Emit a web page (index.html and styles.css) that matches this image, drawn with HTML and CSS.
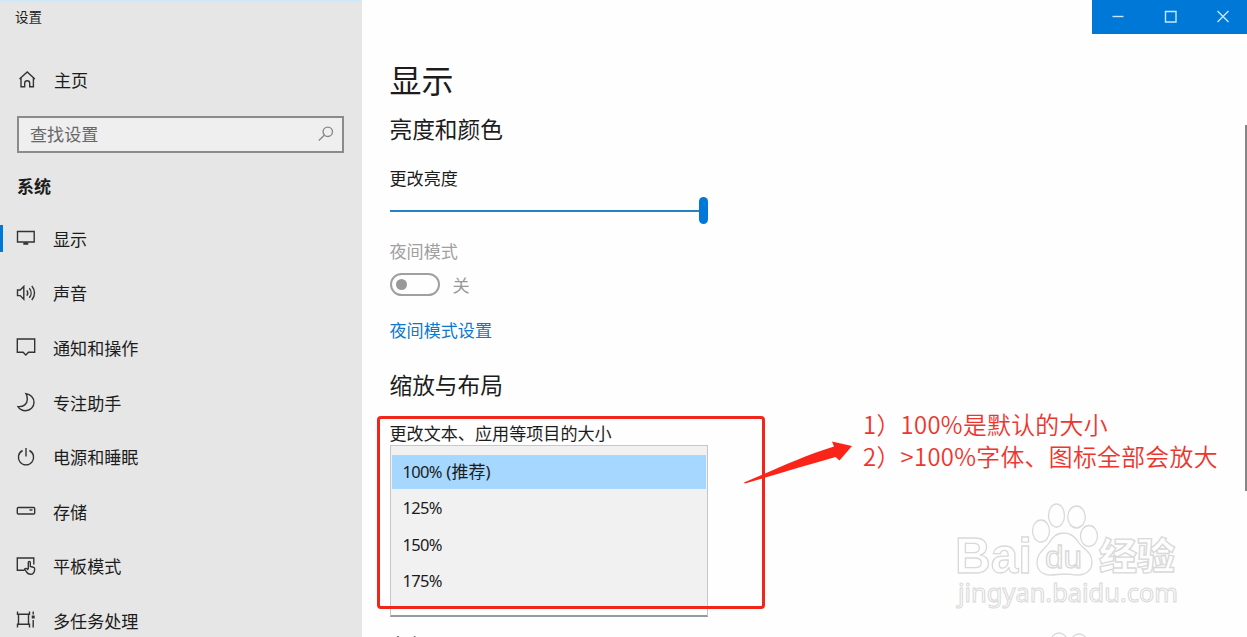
FILE: index.html
```html
<!DOCTYPE html>
<html lang="zh-CN">
<head>
    <meta charset="UTF-8">
    <meta name="viewport" content="width=device-width, initial-scale=1.0">
    <title>设置</title>
    <link rel="stylesheet" href="styles.css">
</head>
<body>
    <aside class="sidebar">
        <div class="app-title">设置</div>

        <a class="home">
            <svg class="icon" width="20" height="20" viewBox="0 0 20 20"><path d="M2.500 10 10.200 3l7.700 7M4 9v8.800h3.700v-3.800c0-3 5-3 5 0v3.800h3.700V9"/></svg>
            <span>主页</span>
        </a>

        <div class="search">
            <span>查找设置</span>
            <svg class="icon" width="16" height="16" viewBox="0 0 16 16"><circle cx="9.8" cy="5.8" r="4.7"/><path d="M6.3 9.3.8 14.6"/></svg>
        </div>

        <h2 class="group">系统</h2>

        <nav class="nav">
            <a class="nav-item active">
                <svg class="icon" width="20" height="20" viewBox="0 0 20 20"><path d="M1.5 3.5h16.7v10.5H1.5z"/><path d="M9.8 14v2M7.300 15.800h5" stroke-width="2"/></svg>
                <span>显示</span>
            </a>
            <a class="nav-item">
                <svg class="icon" width="20" height="20" viewBox="0 0 20 20"><path d="M1.5 7h2.7l3.6-3.6v12.8L4.2 12.6H1.5zM10.8 7.3c1.2 1.6 1.2 3.8 0 5.4M13.3 5.2c2.4 2.8 2.4 6.8 0 9.6M15.8 3c3.6 4.2 3.6 9.8 0 14"/></svg>
                <span>声音</span>
            </a>
            <a class="nav-item">
                <svg class="icon" width="20" height="20" viewBox="0 0 20 20"><path d="M1.3 2h17.4v13.2h-6.2L9.8 18l-2.7-2.8H1.3z"/></svg>
                <span>通知和操作</span>
            </a>
            <a class="nav-item">
                <svg class="icon" width="20" height="20" viewBox="0 0 20 20"><path d="M10 1.6c4.5.6 8 4.3 8 8.800 0 4.800-3.800 8.300-8.300 8.300-3.300 0-6.200-1.600-7.700-4.100 5.700.5 9.300-2.700 9.300-7.200 0-2.300-.3-4.300-1.300-5.800z"/></svg>
                <span>专注助手</span>
            </a>
            <a class="nav-item">
                <svg class="icon" width="20" height="20" viewBox="0 0 20 20"><path d="M10 1v8.5M6.6 3.5a7.600 7.600 0 1 0 6.800 0"/></svg>
                <span>电源和睡眠</span>
            </a>
            <a class="nav-item">
                <svg class="icon" width="20" height="20" viewBox="0 0 20 20"><rect x="1.300" y="6.500" width="17.400" height="6.500" rx="1"/><path d="M13.500 9h3"/></svg>
                <span>存储</span>
            </a>
            <a class="nav-item">
                <svg class="icon" width="20" height="20" viewBox="0 0 20 20"><path d="M8.5 14.200H1.300V2h16.500v6.500M12.300 13V6.500c0-1.500 2-1.500 2 0v4l3 .7c1 .3 1.500 1 1.400 2-.2 3-1.500 5.100-4.200 5.100-2 0-3-.8-4-2.300L8.700 13c.8-1 2-.8 3.600.9"/></svg>
                <span>平板模式</span>
            </a>
            <a class="nav-item">
                <svg class="icon" width="20" height="20" viewBox="0 0 20 20"><path d="M1.500 1.500v2.700h12V1.500M2.500 4.200v10M12.500 4.200v10M1.500 17.500v-3.300h12v3.300M17.200 1.500v3M17.200 10v7.500"/><path d="M17.200 5.500v3" stroke-width="3"/></svg>
                <span>多任务处理</span>
            </a>
        </nav>
    </aside>

    <main class="content">
        <h1>显示</h1>
        <h2>亮度和颜色</h2>

        <div class="label">更改亮度</div>
        <div class="slider"><div class="track"></div><div class="thumb"></div></div>

        <div class="label disabled">夜间模式</div>
        <div class="toggle-row">
            <div class="toggle"><div class="knob"></div></div>
            <span>关</span>
        </div>
        <a class="link">夜间模式设置</a>

        <h2 class="scale-title">缩放与布局</h2>
        <div class="label scale-label">更改文本、应用等项目的大小</div>
        <div class="dropdown">
            <div class="option selected">100% <span>(推荐)</span></div>
            <div class="option">125%</div>
            <div class="option">150%</div>
            <div class="option">175%</div>
        </div>
        <div class="label direction">方向</div>
    </main>

    <div class="window-buttons">
        <svg width="14" height="14" viewBox="0 0 14 14"><path d="M1.500 7.500h11"/></svg>
        <svg width="14" height="14" viewBox="0 0 14 14"><path d="M1.500 2.500h10.500v10.500h-10.500z"/></svg>
        <svg width="14" height="14" viewBox="0 0 14 14"><path d="M1.500 2l11 11M12.500 2l-11 11"/></svg>
    </div>
    <div class="scrollbar"></div>

    <!-- annotations -->
    <div class="mark-box"></div>
    <svg class="mark-arrow" width="112" height="46" viewBox="0 0 112 46"><path d="M2 42.500C30 31 58 17 92 6.500L90 1.500l20 4.500L97.500 20.500 93.500 17C62 26 32 35 3 43.500z"/></svg>
    <div class="mark-text">
        <div>1）100%是默认的大小</div>
        <div>2）&gt;100%字体、图标全部会放大</div>
    </div>

    <svg class="watermark" width="240" height="137" viewBox="0 0 240 137">
        <g class="paw">
            <ellipse cx="89" cy="31" rx="8.500" ry="11"/>
            <ellipse cx="104.500" cy="15.500" rx="8" ry="11.500"/>
            <ellipse cx="124.500" cy="17" rx="8.800" ry="11"/>
            <ellipse cx="137" cy="36" rx="8.500" ry="10.500"/>
            <path d="M112 33c8 0 12 5 15 10 4 6 13 9 13 19 0 8-6 13-14 13-6 0-9-1-14-1s-8 1-13 1c-9 0-14-5-14-13 0-9 8-13 12-19s7-10 15-10z"/>
        </g>
        <text class="logo" x="3" y="73" textLength="77" lengthAdjust="spacingAndGlyphs">Bai</text>
        <text class="du" x="93" y="68" textLength="37" lengthAdjust="spacingAndGlyphs">du</text>
        <text class="logo-cn" x="147" y="70" textLength="76" lengthAdjust="spacingAndGlyphs">经验</text>
        <text class="url" x="6" y="102" textLength="220" lengthAdjust="spacingAndGlyphs">jingyan.baidu.com</text>
        <g class="paw">
            <circle cx="107" cy="141" r="8"/>
            <circle cx="127" cy="142" r="8"/>
        </g>
    </svg>
</body>
</html>
```
FILE: styles.css
```css
* {
    box-sizing: border-box;
}

body {
    position: relative;
    display: flex;
    width: 1247px;
    height: 637px;
    margin: 0;
    overflow: hidden;
    background: #fefefe;
    color: #1c1c1c;
    font-family: "Noto Sans CJK SC", sans-serif;
    font-size: 17.1px;
}

h1,
h2 {
    margin: 0;
    font-weight: 400;
}

.icon {
    flex: none;
    fill: none;
    stroke: #333;
    stroke-width: 1.4;
}

/* sidebar */
.sidebar {
    flex: none;
    width: 362px;
    height: 637px;
    overflow: hidden;
    background: #e6e6e6;
    border-top: 2px solid #cdeafa;
}

.app-title {
    height: 31px;
    padding-left: 15px;
    font-size: 13.5px;
    line-height: 28px;
}

.home {
    display: flex;
    align-items: center;
    gap: 17px;
    height: 34px;
    margin-top: 29px;
    padding-left: 17px;
}

.search {
    display: flex;
    align-items: center;
    justify-content: space-between;
    width: 327px;
    height: 37px;
    margin: 20px 0 0 17px;
    padding: 0 8px 2px 11px;
    border: 2px solid #8b8b8b;
    background: #efefef;
    color: #676767;
}

.search .icon {
    stroke: #888;
}

.group {
    height: 34px;
    margin-top: 16px;
    padding-left: 17px;
    font-size: 17px;
    font-weight: 700;
    line-height: 34px;
}

.nav {
    margin-top: 8px;
}

.nav-item {
    display: flex;
    align-items: center;
    gap: 17px;
    height: 54.6px;
    padding-left: 16px;
}

.nav-item.active {
    background: linear-gradient(#0078d7, #0078d7) 0 50% / 3px 27px no-repeat;
}

/* content */
.content {
    display: flex;
    flex-direction: column;
    align-items: flex-start;
    flex: 1;
    height: 637px;
    padding: 55px 0 0 27.5px;
}

.content > * {
    flex: none;
}

h1 {
    height: 48px;
    font-size: 32px;
    line-height: 48px;
}

.content h2 {
    height: 34px;
    margin-top: 9px;
    font-size: 22.7px;
    line-height: 34px;
}

.label {
    height: 26px;
    margin-top: 19px;
    line-height: 26px;
}

.slider {
    display: flex;
    align-items: center;
    height: 27px;
    margin-top: 6px;
}

.track {
    width: 309px;
    height: 2px;
    background: #2583c5;
}

.thumb {
    width: 9px;
    height: 27px;
    border-radius: 5px;
    background: #0078d7;
}

.label.disabled {
    margin-top: 14px;
    color: #a0a0a0;
}

.toggle-row {
    display: flex;
    align-items: center;
    gap: 13px;
    height: 24px;
    margin-top: 8px;
    color: #999;
}

.toggle {
    display: flex;
    align-items: center;
    width: 50px;
    height: 23px;
    padding-left: 4px;
    border: 2px solid #a0a0a0;
    border-radius: 12px;
}

.knob {
    width: 11px;
    height: 11px;
    border-radius: 50%;
    background: #999;
}

.link {
    height: 26px;
    margin-top: 21px;
    color: #0f78ca;
    line-height: 26px;
}

.content .scale-title {
    margin-top: 25px;
}

.scale-label {
    margin-top: 18px;
}

.dropdown {
    width: 318px;
    height: 172px;
    margin-top: -1px;
    padding: 9px 1px 0;
    border: 1px solid #c4c8c9;
    border-bottom: 2px solid #929b9d;
    background: linear-gradient(#f1f1f1 162px, #fff 162px);
}

.option {
    height: 36.4px;
    padding-left: 11px;
    font-family: "Noto Sans", "Noto Sans CJK SC", sans-serif;
    font-size: 16.5px;
    letter-spacing: -0.7px;
    line-height: 36px;
}

.option.selected {
    height: 34px;
    margin-bottom: 1.4px;
    background: #a5d7ff;
    line-height: 34px;
}

.option span {
    margin-left: 1px;
    font-size: 17px;
    letter-spacing: 0;
}

.direction {
    margin-top: 14px;
}

/* window frame */
.window-buttons {
    position: absolute;
    top: 0;
    right: 0;
    display: flex;
    align-items: center;
    justify-content: space-between;
    width: 155px;
    height: 34px;
    padding: 0 17px 2px 19px;
    background: #0078d7;
}

.window-buttons svg {
    fill: none;
    stroke: #c9e8ff;
    stroke-width: 1.4;
}

.scrollbar {
    position: absolute;
    top: 125px;
    right: 0;
    width: 2px;
    height: 366px;
    background: #858585;
}

/* annotations */
.mark-box {
    position: absolute;
    top: 416px;
    left: 377px;
    width: 388px;
    height: 193px;
    border: 3px solid #f0261c;
    border-radius: 4px;
}

.mark-arrow {
    position: absolute;
    top: 440px;
    left: 742px;
    fill: #fb2418;
}

.mark-text {
    position: absolute;
    top: 408px;
    left: 863px;
    color: #ee352d;
    font-size: 23.8px;
    font-weight: 350;
    letter-spacing: 0.35px;
    line-height: 32px;
    white-space: nowrap;
}

/* watermark */
.watermark {
    position: absolute;
    top: 500px;
    left: 952px;
    fill: #fefefe;
    stroke: #d9d9d9;
    stroke-width: 1.3;
}

.logo {
    font: 700 50px "Liberation Sans", sans-serif;
}

.du {
    font: 400 31px "Liberation Sans", sans-serif;
}

.logo-cn {
    font-size: 37px;
    font-weight: 900;
}

.url {
    font: 400 25px "Noto Sans", sans-serif;
    stroke-width: 1;
}
```
